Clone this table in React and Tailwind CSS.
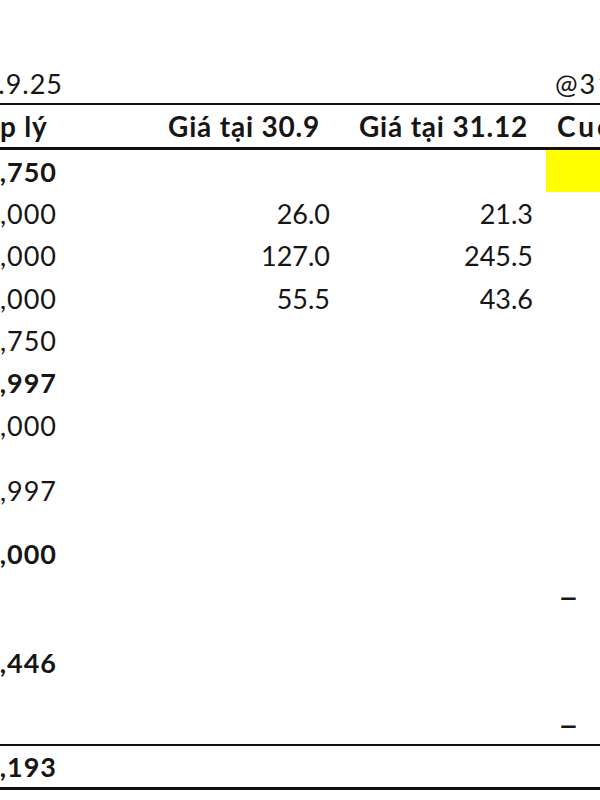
const rows = [
  { a: '125,750', bold: true, h: 'h-[42px]', yellow: true },
  { a: '14,000', b: '26.0', c: '21.3', h: 'h-[42px]' },
  { a: '82,000', b: '127.0', c: '245.5', h: 'h-[43px]' },
  { a: '28,000', b: '55.5', c: '43.6', h: 'h-[42px]' },
  { a: '1,750', h: 'h-[42px]' },
  { a: '102,997', bold: true, h: 'h-[43px]' },
  { a: '100,000', h: 'h-[42px]' },
  { a: '2,997', h: 'h-[88px]' },
  { a: '60,000', bold: true, h: 'h-[38px]' },
  { d: '–', h: 'h-[48px]' },
  { a: '41,446', bold: true, h: 'h-[84px]' },
  { d: '–', h: 'h-[40px]' },
];

function Row({ r }) {
  return (
    <div className={`grid grid-cols-[56px_284px_206px_54px] ${r.h} ${r.bold ? 'font-bold' : ''}`}>
      <div className="flex items-center justify-end whitespace-nowrap tracking-[1px] -mr-[1px]">{r.a}</div>
      <div className="flex items-center justify-end whitespace-nowrap pr-[10px]">{r.b}</div>
      <div className="flex items-center justify-end whitespace-nowrap pr-[13px]">{r.c}</div>
      <div className={`flex items-center pl-[12px] ${r.yellow ? 'bg-[#ffff00]' : ''}`}>
        {r.d && <span className="text-[36px] leading-none">{r.d}</span>}
      </div>
    </div>
  );
}

export default function App() {
  return (
    <div className="w-[600px] h-[800px] overflow-hidden bg-white text-[#161616] font-['Lato','Liberation_Sans',sans-serif] text-[27px] leading-none">
      <div className="h-[64px]" />
      <div className="grid grid-cols-[62px_484px_54px] h-[39px]">
        <div className="flex items-center justify-end whitespace-nowrap tracking-[1px] -mr-[1px]">30.9.25</div>
        <div />
        <div className="flex items-center pl-[9px] whitespace-nowrap tracking-[2px]">@31.12.25</div>
      </div>
      <div className="border-t-2 border-b-[3px] border-[#111]">
        <div className="grid grid-cols-[56px_284px_206px_54px] h-[42px] font-bold text-[28px] tracking-[0.8px]">
          <div className="flex items-center whitespace-nowrap">p lý</div>
          <div className="flex items-center justify-end whitespace-nowrap pr-[20px]">Giá tại 30.9</div>
          <div className="flex items-center justify-end whitespace-nowrap pr-[18px]">Giá tại 31.12</div>
          <div className="flex items-center pl-[11px] whitespace-nowrap tracking-[3px]">Cuối kỳ</div>
        </div>
      </div>
      {rows.map((r, i) => (
        <Row key={i} r={r} />
      ))}
      <div className="border-t-2 border-b-[3px] border-[#111]">
        <Row r={{ a: '301,193', bold: true, h: 'h-[41px]' }} />
      </div>
    </div>
  );
}
